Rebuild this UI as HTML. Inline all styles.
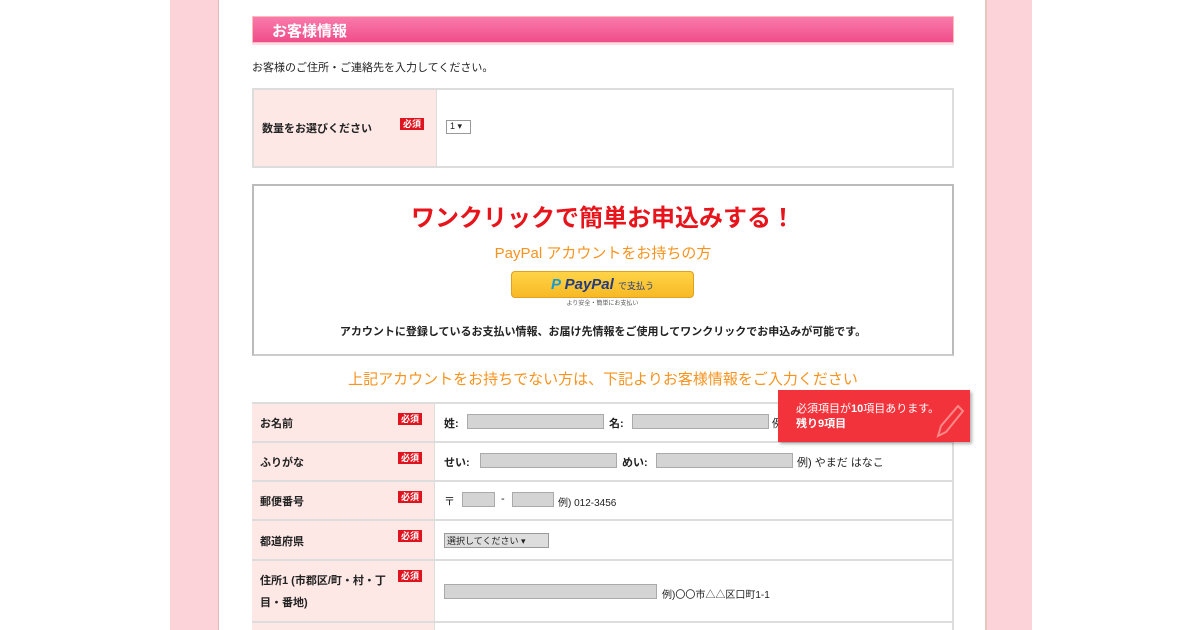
<!DOCTYPE html>
<html><head><meta charset="utf-8"><style>
*{margin:0;padding:0;box-sizing:border-box}
html,body{width:1200px;height:630px;overflow:hidden}
body{background:#fff;position:relative;font-family:"Liberation Sans","Noto Sans CJK JP",sans-serif;font-size:11px;color:#222}
.a{position:absolute}
.req{position:absolute;background:#e0141e;color:#fff;font-size:9px;font-weight:bold;padding:0 3px;line-height:12px}
.lab{font-size:11px;font-weight:bold}
.in{position:absolute;background:#d4d4d4;border:1px solid #aaa;height:15px}
.row{position:absolute;left:252px;width:702px;border-top:2px solid #ddd}
.lc{position:absolute;left:0;top:0;bottom:0;width:183px;background:#fde8e6;border-right:1px solid #ddd}
</style></head><body>
<div class="a" style="left:170px;top:0;width:49px;height:630px;background:#fcd3d9;border-right:1px solid #e4b8b8"></div>
<div class="a" style="left:985px;top:0;width:47px;height:630px;background:#fcd3d9;border-left:2px solid #e8c8b8"></div>
<div class="a" style="left:252px;top:16px;width:702px;height:27px;background:linear-gradient(#f97bab,#f04d8a);border:1px solid #fbb;box-shadow:0 2px 0 #fde"></div>
<div class="a" style="left:272px;top:20px;color:#fff;font-weight:bold;font-size:15px">お客様情報</div>
<div class="a" style="left:252px;top:59px;font-size:11px">お客様のご住所・ご連絡先を入力してください。</div>
<div class="row" style="top:88px;height:80px;border:2px solid #ddd"><div class="lc"></div>
<div class="a lab" style="left:8px;top:30px">数量をお選びください</div><div class="req" style="left:146px;top:28px">必須</div>
<div class="a" style="left:192px;top:30px;border:1px solid #999;width:25px;height:14px;font-size:9px;padding-left:3px">1 ▾</div></div>
<div class="a" style="left:252px;top:184px;width:702px;height:172px;border:2px solid #bbb;border-bottom-color:#ccc"></div>
<div class="a" style="left:252px;top:198px;width:702px;text-align:center;color:#e8141c;font-weight:bold;font-size:24px">ワンクリックで簡単お申込みする！</div>
<div class="a" style="left:252px;top:242px;width:702px;text-align:center;color:#f7931e;font-size:15px">PayPal アカウントをお持ちの方</div>
<div class="a" style="left:511px;top:271px;width:183px;height:27px;background:linear-gradient(#ffd447,#f7b924);border-radius:4px;border:1px solid #e0a020;text-align:center;line-height:25px;color:#253b80;font-weight:bold;font-style:italic;font-size:15px"><span style="color:#179bd7">P</span> PayPal <span style="font-size:9px;font-style:normal;font-weight:normal">で支払う</span></div>
<div class="a" style="left:511px;top:298px;width:183px;text-align:center;font-size:6px;color:#555">より安全・簡単にお支払い</div>
<div class="a" style="left:252px;top:323px;width:702px;text-align:center;font-size:11px;font-weight:bold">アカウントに登録しているお支払い情報、お届け先情報をご使用してワンクリックでお申込みが可能です。</div>
<div class="a" style="left:252px;top:368px;width:702px;text-align:center;color:#f7931e;font-size:15px">上記アカウントをお持ちでない方は、下記よりお客様情報をご入力ください</div>
<div class="a" style="left:252px;top:402px;width:702px;height:228px;border-left:2px solid #ddd;border-right:2px solid #ddd"></div>
<div class="row" style="top:402px;height:39px"><div class="lc"></div><div class="a lab" style="left:8px;top:11px">お名前</div><div class="req" style="left:146px;top:9px">必須</div>
<div class="a lab" style="left:192px;top:11px">姓:</div><div class="in" style="left:215px;top:10px;width:137px"></div><div class="a lab" style="left:357px;top:11px">名:</div><div class="in" style="left:380px;top:10px;width:137px"></div><div class="a" style="left:520px;top:11px">例)</div></div>
<div class="row" style="top:441px;height:39px"><div class="lc"></div><div class="a lab" style="left:8px;top:11px">ふりがな</div><div class="req" style="left:146px;top:9px">必須</div>
<div class="a lab" style="left:192px;top:11px">せい:</div><div class="in" style="left:228px;top:10px;width:137px"></div><div class="a lab" style="left:370px;top:11px">めい:</div><div class="in" style="left:404px;top:10px;width:137px"></div><div class="a" style="left:545px;top:11px">例) やまだ はなこ</div></div>
<div class="row" style="top:480px;height:39px"><div class="lc"></div><div class="a lab" style="left:8px;top:11px">郵便番号</div><div class="req" style="left:146px;top:9px">必須</div>
<div class="a" style="left:192px;top:11px">〒</div><div class="in" style="left:210px;top:10px;width:33px"></div><div class="a" style="left:249px;top:11px">-</div><div class="in" style="left:260px;top:10px;width:42px"></div><div class="a" style="left:306px;top:12px;font-size:10px">例) 012-3456</div></div>
<div class="row" style="top:519px;height:40px"><div class="lc"></div><div class="a lab" style="left:8px;top:12px">都道府県</div><div class="req" style="left:146px;top:9px">必須</div>
<div class="a" style="left:192px;top:12px;background:#ddd;border:1px solid #999;width:105px;height:15px;font-size:9px;padding-left:2px">選択してください ▾</div></div>
<div class="row" style="top:559px;height:62px"><div class="lc"></div><div class="a lab" style="left:8px;top:9px;line-height:22px;width:140px">住所1 (市郡区/町・村・丁目・番地)</div><div class="req" style="left:146px;top:9px">必須</div>
<div class="in" style="left:192px;top:23px;width:213px"></div><div class="a" style="left:410px;top:25px;font-size:10px">例)〇〇市△△区口町1-1</div></div>
<div class="row" style="top:621px;height:20px"><div class="lc"></div></div>
<div class="a" style="left:778px;top:390px;width:192px;height:52px;background:#f2333b;box-shadow:2px 2px 3px rgba(0,0,0,.3);color:#fff;font-size:11px;padding:12px 0 0 18px;line-height:15px">必須項目が<b>10</b>項目あります。<br><b>残り9項目</b>
<svg class="a" style="right:6px;top:12px" width="32" height="36" viewBox="0 0 32 36"><path d="M6 34 L9 24 L26 4 L31 9 L14 30 Z" fill="none" stroke="#f88" stroke-width="2"/></svg></div>
</body></html>
